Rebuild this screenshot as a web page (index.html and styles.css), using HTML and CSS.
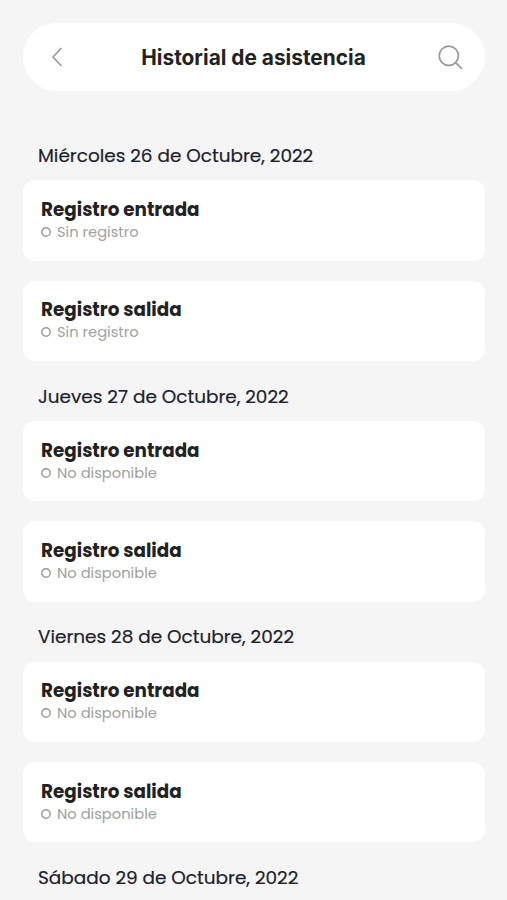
FILE: index.html
```html
<!DOCTYPE html>
<html lang="es">
<head>
  <meta charset="UTF-8" />
  <meta name="viewport" content="width=device-width, initial-scale=1" />
  <title>Historial de asistencia</title>
  <link rel="stylesheet" href="styles.css">
</head>
<body>

  <header class="topbar">
    <button type="button" class="icon-btn" aria-label="Volver">
      <svg width="12" height="20" viewBox="0 0 12 20"><path d="M10 1.5L2 10l8 8.5" /></svg>
    </button>
    <h1 class="title">Historial de asistencia</h1>
    <button type="button" class="icon-btn" aria-label="Buscar">
      <svg width="26" height="26" viewBox="0 0 26 26"><circle cx="11.8" cy="11.8" r="9.6" /><path d="M18.6 18.6l5.9 5.7" /></svg>
    </button>
  </header>

  <main class="history">
    <section class="day">
      <h2 class="date">Miércoles 26 de Octubre, 2022</h2>
      <div class="card">
        <h3 class="card-title">Registro entrada</h3>
        <p class="status"><svg class="dot" width="10" height="10" viewBox="0 0 10 10"><circle cx="5" cy="5" r="4.2" /></svg><span>Sin registro</span></p>
      </div>
      <div class="card">
        <h3 class="card-title">Registro salida</h3>
        <p class="status"><svg class="dot" width="10" height="10" viewBox="0 0 10 10"><circle cx="5" cy="5" r="4.2" /></svg><span>Sin registro</span></p>
      </div>
    </section>

    <section class="day">
      <h2 class="date">Jueves 27 de Octubre, 2022</h2>
      <div class="card">
        <h3 class="card-title">Registro entrada</h3>
        <p class="status"><svg class="dot" width="10" height="10" viewBox="0 0 10 10"><circle cx="5" cy="5" r="4.2" /></svg><span>No disponible</span></p>
      </div>
      <div class="card">
        <h3 class="card-title">Registro salida</h3>
        <p class="status"><svg class="dot" width="10" height="10" viewBox="0 0 10 10"><circle cx="5" cy="5" r="4.2" /></svg><span>No disponible</span></p>
      </div>
    </section>

    <section class="day">
      <h2 class="date">Viernes 28 de Octubre, 2022</h2>
      <div class="card">
        <h3 class="card-title">Registro entrada</h3>
        <p class="status"><svg class="dot" width="10" height="10" viewBox="0 0 10 10"><circle cx="5" cy="5" r="4.2" /></svg><span>No disponible</span></p>
      </div>
      <div class="card">
        <h3 class="card-title">Registro salida</h3>
        <p class="status"><svg class="dot" width="10" height="10" viewBox="0 0 10 10"><circle cx="5" cy="5" r="4.2" /></svg><span>No disponible</span></p>
      </div>
    </section>

    <section class="day day-last">
      <h2 class="date">Sábado 29 de Octubre, 2022</h2>
    </section>
  </main>

</body>
</html>
```

FILE: styles.css
```css
* {
  box-sizing: border-box;
}

body {
  margin: 0;
  height: 900px;
  padding: 23px 22px 0 23px;
  background: #f5f5f5;
  font-family: 'Poppins', 'Inter', sans-serif;
  overflow: hidden;
}

h1, h2, h3, p {
  margin: 0;
}

.topbar {
  display: flex;
  align-items: center;
  justify-content: space-between;
  height: 68px;
  padding: 0 22px 0 28px;
  border-radius: 34px;
  background: #fff;
}

.title {
  padding-left: 7px;
  font-family: 'Inter', sans-serif;
  font-size: 20.85px;
  font-weight: 700;
  color: #222;
  white-space: nowrap;
}

.icon-btn {
  display: flex;
  padding: 0;
  border: none;
  background: none;
  cursor: pointer;
}

.icon-btn svg {
  fill: none;
  stroke: #999;
  stroke-width: 1.7;
  stroke-linecap: round;
  stroke-linejoin: round;
}

.history {
  padding-top: 35px;
}

.day {
  height: 240.7px;
}

.day-last {
  height: 50px;
}

.date {
  height: 54.4px;
  padding-left: 15px;
  font-size: 18.45px;
  font-weight: 400;
  line-height: 60px;
  color: #1c222e;
  white-space: nowrap;
  -webkit-text-stroke: 0.2px #1c222e;
}

.day-last .date {
  height: 50px;
}

.card {
  height: 80.4px;
  margin-bottom: 19.8px;
  padding: 16.6px 18px;
  border-radius: 12px;
  background: #fff;
}

.card-title {
  font-size: 18.35px;
  font-weight: 700;
  line-height: 26px;
  color: #222;
}

.status {
  display: flex;
  align-items: center;
  gap: 6px;
  font-size: 14.7px;
  line-height: 18px;
  color: #a0a0a0;
}

.dot {
  fill: none;
  stroke: #999;
  stroke-width: 1.4;
}
```
